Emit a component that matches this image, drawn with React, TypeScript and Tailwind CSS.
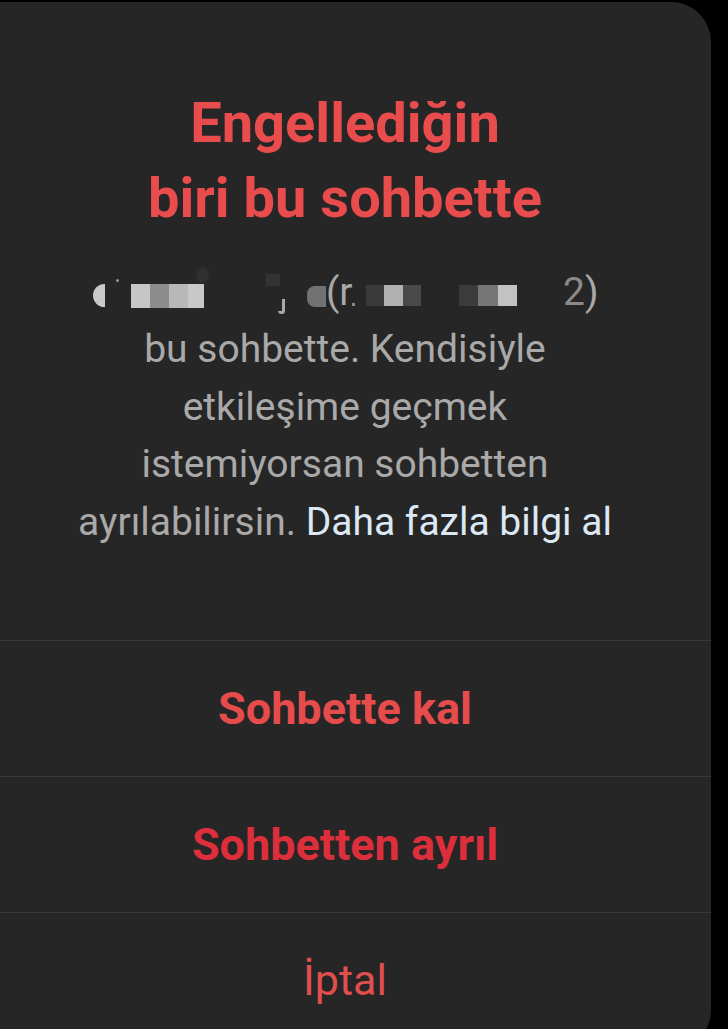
import { ReactElement } from 'react';

// blurred name row: pixelated blocks standing in for the redacted user name
const NAME_BLOCKS: Array<{ w: number; c: string }> = [
  { w: 19, c: '#c6c6c6' },
  { w: 19, c: '#8c8c8c' },
  { w: 19, c: '#b8b8b8' },
  { w: 16, c: '#c8c8c8' },
];

function BlurredName(): ReactElement {
  return (
    <div className="relative h-[57px] w-[690px]">
      <div className="absolute left-[93px] top-[20px] h-[23px] w-[12px] rounded-l-full bg-[#c9c9c9] blur-[0.5px]" />
      <div className="absolute left-[116px] top-[15px] h-[3px] w-[3px] rounded-full bg-[#9a9a9a]" />
      <div className="absolute left-[131px] top-[20px] flex h-[24px] blur-[0.5px]">
        {NAME_BLOCKS.map((b, i) => (
          <div key={i} style={{ width: b.w, background: b.c }} className="h-full" />
        ))}
      </div>
      <div className="absolute left-[196px] top-[4px] h-[15px] w-[13px] rounded-full bg-[#303030] blur-[1px]" />
      <div className="absolute left-[266px] top-[10px] h-[12px] w-[14px] bg-[#333333] blur-[0.5px]" />
      <div className="absolute left-[278px] top-[35px] h-[15px] w-[7px] rounded-b-full border-b-[3px] border-r-[3px] border-[#a9a9a9]" />
      <div className="absolute left-[307px] top-[22px] h-[21px] w-[19px] rounded-l-[8px] bg-[#727272] blur-[0.5px]" />
      <span className="absolute left-[326px] top-0 text-[39px] leading-[57px] text-[#a9a9a9]">(r</span>
      <div className="absolute left-[352px] top-[39px] h-[3px] w-[3px] bg-[#8a8a8a]" />
      <div className="absolute left-[366px] top-[21px] flex h-[21px] blur-[0.5px]">
        <div className="h-full w-[18px] bg-[#3a3a3a]" />
        <div className="h-full w-[19px] bg-[#b1b1b1]" />
        <div className="h-full w-[18px] bg-[#4a4a4a]" />
      </div>
      <div className="absolute left-[459px] top-[21px] flex h-[21px] blur-[0.5px]">
        <div className="h-full w-[19px] bg-[#3c3c3c]" />
        <div className="h-full w-[20px] bg-[#767676]" />
        <div className="h-full w-[19px] bg-[#c2c2c2]" />
      </div>
      <span className="absolute left-[563px] top-0 text-[39px] leading-[57px] text-[#a9a9a9]">
        <span className="text-[#8a8a8a]">2</span>)
      </span>
    </div>
  );
}

function ActionRow({ label, className }: { label: string; className: string }): ReactElement {
  return (
    <div className="flex h-[136px] items-center justify-center border-t border-[#383838] pr-[21px]">
      <span className={className}>{label}</span>
    </div>
  );
}

export default function App(): ReactElement {
  return (
    <div
      className="h-[1029px] w-[728px] overflow-hidden bg-black pt-[2px]"
      style={{ fontFamily: 'Roboto, "Noto Sans", sans-serif' }}
    >
      <div className="flex h-[1048px] w-[711px] flex-col rounded-r-[40px] bg-[#262626]">
        {/* Header + message */}
        <div className="flex h-[638px] flex-col items-center pr-[21px] pt-[84px]">
          <h2 className="text-center text-[56px] font-bold leading-[75px] text-[#e84c4c]">
            Engellediğin
            <br />
            biri bu sohbette
          </h2>
          <div className="mt-[28px]">
            <BlurredName />
          </div>
          <p className="text-center text-[39px] leading-[57.7px] text-[#a9a9a9]">
            bu sohbette. Kendisiyle
            <br />
            etkileşime geçmek
            <br />
            istemiyorsan sohbetten
            <br />
            ayrılabilirsin. <span className="text-[#dce8f4]">Daha fazla bilgi al</span>
          </p>
        </div>

        <ActionRow label="Sohbette kal" className="text-[45px] font-bold text-[#e64c4c]" />
        <ActionRow label="Sohbetten ayrıl" className="text-[45px] font-bold text-[#dc2e3b]" />
        <ActionRow label="İptal" className="text-[43px] text-[#e04e4e]" />
      </div>
    </div>
  );
}
